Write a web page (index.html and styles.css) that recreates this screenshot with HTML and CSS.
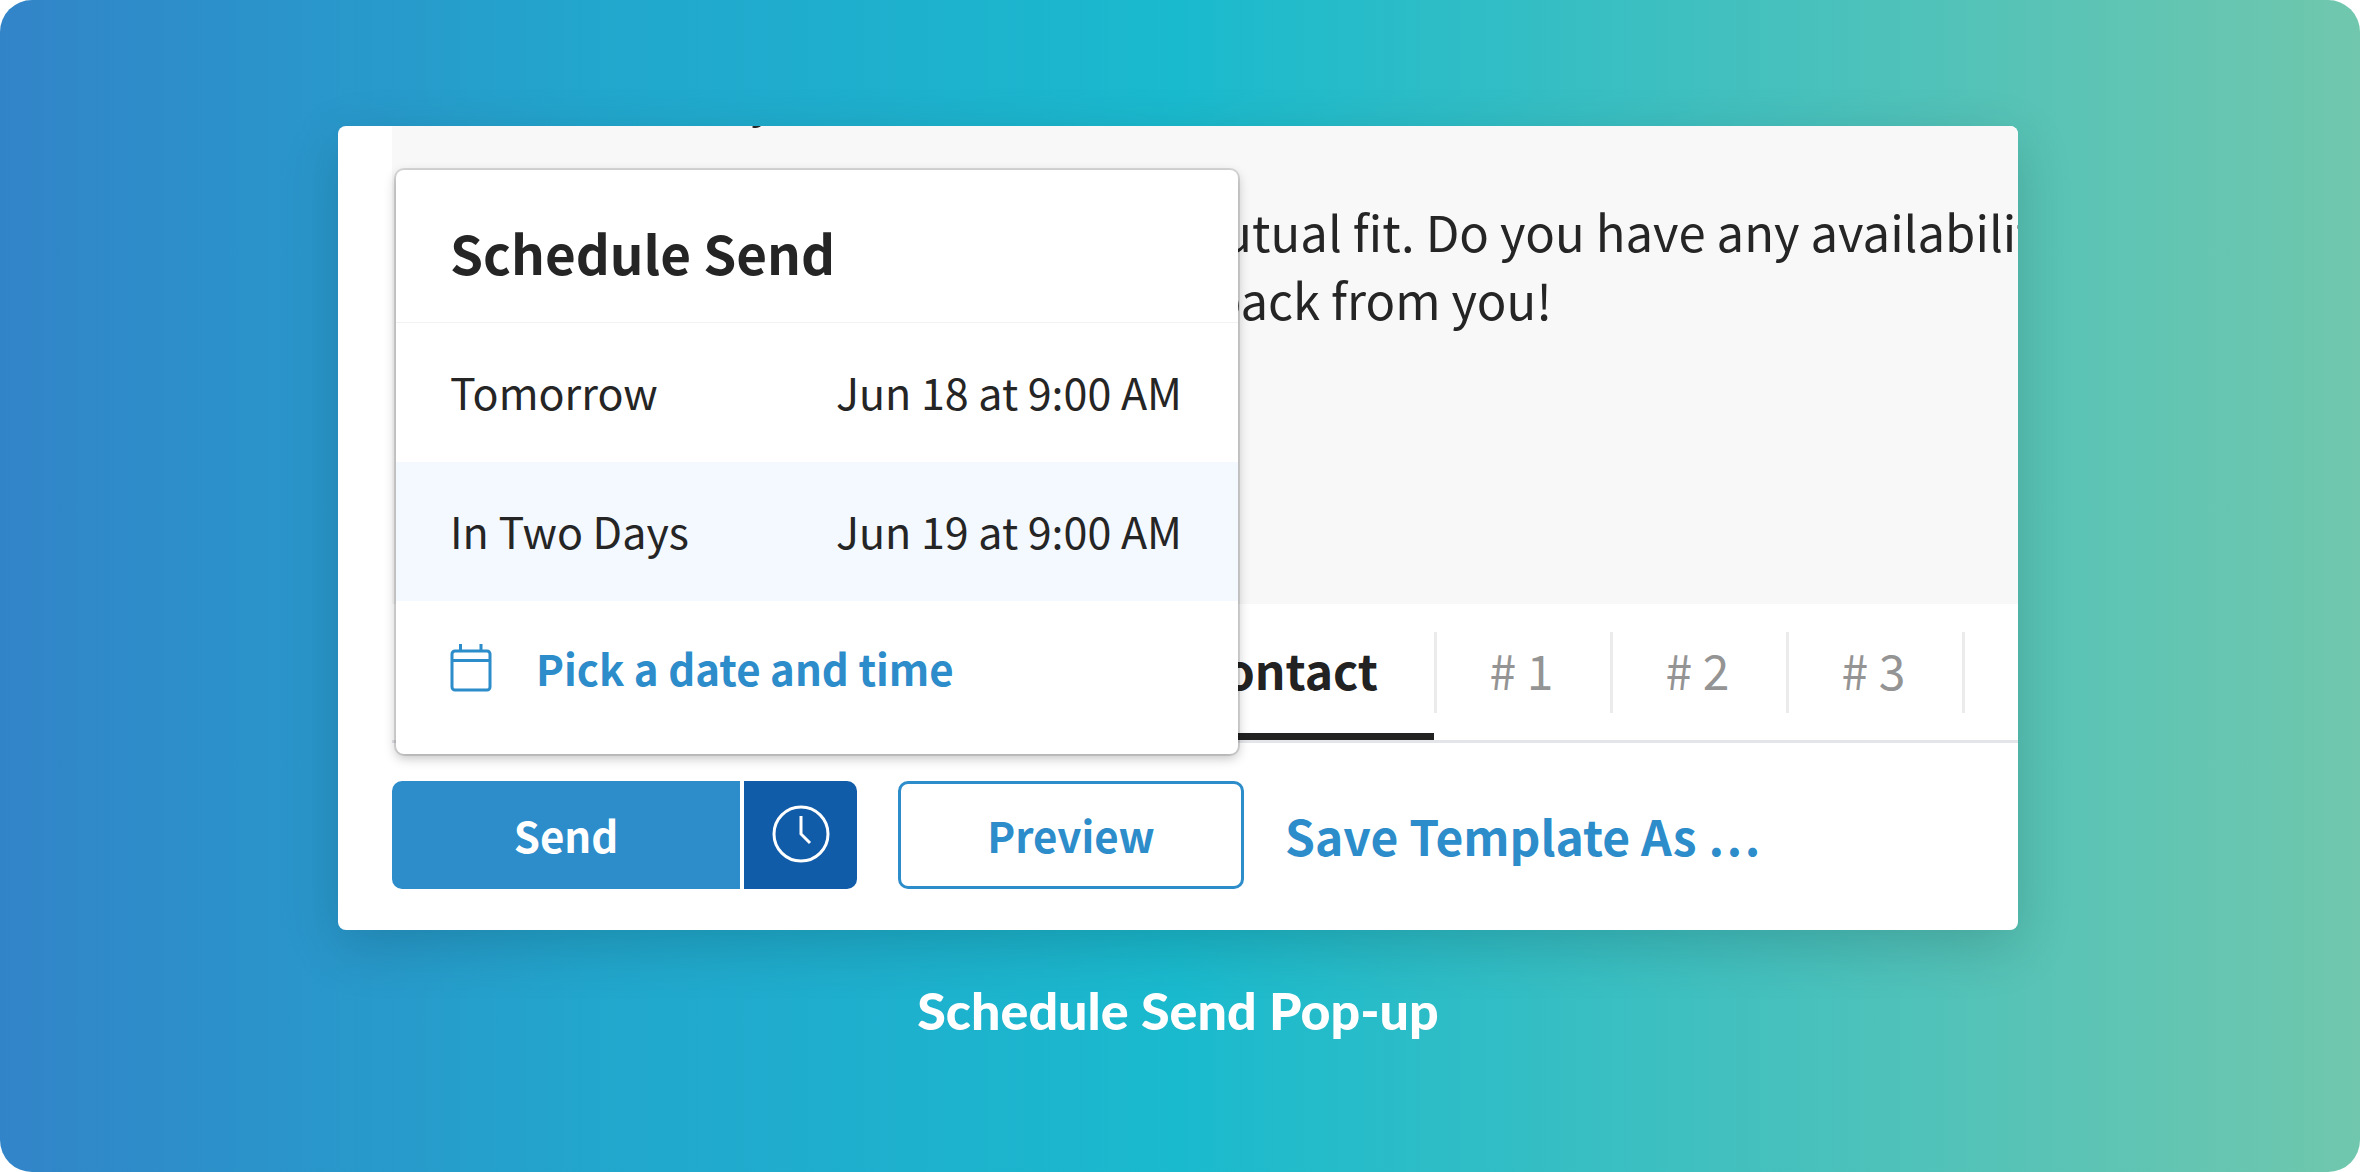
FILE: index.html
```html
<!DOCTYPE html>
<html lang="en">
<head>
    <meta charset="UTF-8">
    <meta name="viewport" content="width=device-width, initial-scale=1.0">
    <title>Schedule Send Pop-up</title>
    <link rel="stylesheet" href="styles.css">
</head>
<body>
    <main class="banner">
        <section class="composer">
            <div class="editor">
                <div class="message">
                    <p class="intro">Tuesday</p>
                    <p class="ask">mutual fit. Do you have any availability</p>
                    <p class="closing">back from you!</p>
                </div>
                <nav class="tabs">
                    <a class="tab active" href="#contact">Contact</a>
                    <a class="tab" href="#one"># 1</a>
                    <a class="tab" href="#two"># 2</a>
                    <a class="tab" href="#three"># 3</a>
                </nav>

                <div class="popup">
                    <h1>Schedule Send</h1>
                    <button type="button" class="option"><span>Tomorrow</span><span>Jun 18 at 9:00 AM</span></button>
                    <button type="button" class="option selected"><span>In Two Days</span><span>Jun 19 at 9:00 AM</span></button>
                    <button type="button" class="pick">
                        <svg class="calendar" viewBox="0 0 42 48" fill="none" stroke="currentColor" stroke-width="3">
                            <rect x="2" y="7" width="38" height="39" rx="3"/>
                            <path d="M2 16.500h38M10.500 0v7M31 0v7"/>
                        </svg>
                        Pick a date and time
                    </button>
                </div>
            </div>

            <div class="actions">
                <div class="split">
                    <button type="button" class="send">Send</button>
                    <button type="button" class="later" aria-label="Schedule">
                        <svg class="clock" viewBox="0 0 58 58" fill="none" stroke="currentColor" stroke-width="3">
                            <circle cx="29" cy="29" r="27"/>
                            <path d="M29 11v18l9 9"/>
                        </svg>
                    </button>
                </div>
                <button type="button" class="preview">Preview</button>
                <a class="save" href="#save">Save Template As …</a>
            </div>
        </section>
        <p class="caption">Schedule Send Pop-up</p>
    </main>
</body>
</html>
```
FILE: styles.css
```css
* {
    box-sizing: border-box;
}
body {
    margin: 0;
    background: #fff;
    color: #252525;
    font-family: "Noto Sans CJK SC", "Noto Sans", sans-serif;
    font-size: 43px;
}
h1, p {
    margin: 0;
}
a {
    text-decoration: none;
    color: #2d8cca;
}
button {
    border: none;
    background: none;
    padding: 0;
    margin: 0;
    font: inherit;
    color: inherit;
    cursor: pointer;
}
svg {
    display: block;
    flex: none;
}
.banner {
    min-height: 100vh;
    padding: 126px 342px 0 338px;
    border-radius: 32px;
    background: linear-gradient(90deg, #3284c8, #22a6cd 25%, #1abace 50%, #70c7ad);
}
.composer {
    background: #fff;
    border-radius: 8px;
    box-shadow: 0 16px 56px rgba(0, 0, 0, 0.16);
    padding: 0 0 41px 54px;
    overflow: hidden;
}
.editor {
    position: relative;
}

/* message body */
.message {
    display: flow-root;
    height: 478px;
    background: #f8f8f8;
    font-size: 49px;
    line-height: 68px;
    white-space: nowrap;
    overflow: hidden;
}
.intro {
    margin-top: -64px;
    margin-bottom: 67px;
    padding-left: 194px;
}
.ask {
    padding-left: 785px;
}
.closing {
    padding-left: 819px;
}

/* step tabs */
.tabs {
    display: flex;
    height: 139px;
    padding: 28px 0 0 660px;
    border-bottom: 3px solid #e4e5e9;
    font-size: 48px;
    line-height: 74px;
}
.tab {
    flex: none;
    width: 176px;
    height: 81px;
    padding-right: 4px;
    border-left: 3px solid #ebebeb;
    text-align: center;
    color: #949494;
}
.tab:last-child {
    width: 179px;
    border-right: 3px solid #ebebeb;
}
.tab.active {
    width: 382px;
    height: 108px;
    padding-right: 56px;
    border-left: none;
    border-bottom: 7px solid #222;
    text-align: right;
    font-weight: 700;
    color: #222;
}

/* schedule popup */
.popup {
    position: absolute;
    top: 44px;
    left: 4px;
    width: 842px;
    background: #fff;
    border-radius: 8px;
    box-shadow: 0 0 0 2px rgba(0, 0, 0, 0.12), 0 4px 12px rgba(0, 0, 0, 0.25);
}
.popup h1 {
    padding: 52px 54px 40px;
    border-bottom: 1px solid #f2f2f2;
    font-size: 53px;
    line-height: 60px;
    font-weight: 700;
}
.option {
    display: flex;
    justify-content: space-between;
    align-items: center;
    width: 100%;
    height: 139px;
    padding: 0 56px 4px 54px;
}
.selected {
    background: #f4f9ff;
}
.pick {
    display: flex;
    align-items: center;
    gap: 44px;
    width: 100%;
    height: 153px;
    padding: 0 54px 20px;
    color: #2d8cca;
    font-size: 42px;
    font-weight: 700;
}
.calendar {
    width: 42px;
    height: 48px;
}

/* bottom buttons */
.actions {
    display: flex;
    align-items: center;
    gap: 41px;
    margin-top: 38px;
    font-size: 42px;
    font-weight: 700;
}
.split {
    display: flex;
    gap: 4px;
}
.send, .later, .preview {
    height: 108px;
    padding-bottom: 2px;
}
.send {
    width: 348px;
    background: #2d8cca;
    color: #fff;
    border-radius: 10px 0 0 10px;
}
.later {
    display: flex;
    align-items: center;
    justify-content: center;
    width: 113px;
    background: #115ca9;
    color: #fff;
    border-radius: 0 10px 10px 0;
}
.clock {
    width: 58px;
    height: 58px;
}
.preview {
    width: 346px;
    border: 3px solid #2d8cca;
    border-radius: 10px;
    color: #2d8cca;
}
.save {
    font-size: 48px;
}
.caption {
    margin-top: 50px;
    text-align: center;
    font-family: Lato, sans-serif;
    font-size: 52px;
    line-height: 60px;
    font-weight: 900;
    color: #fff;
}
```
